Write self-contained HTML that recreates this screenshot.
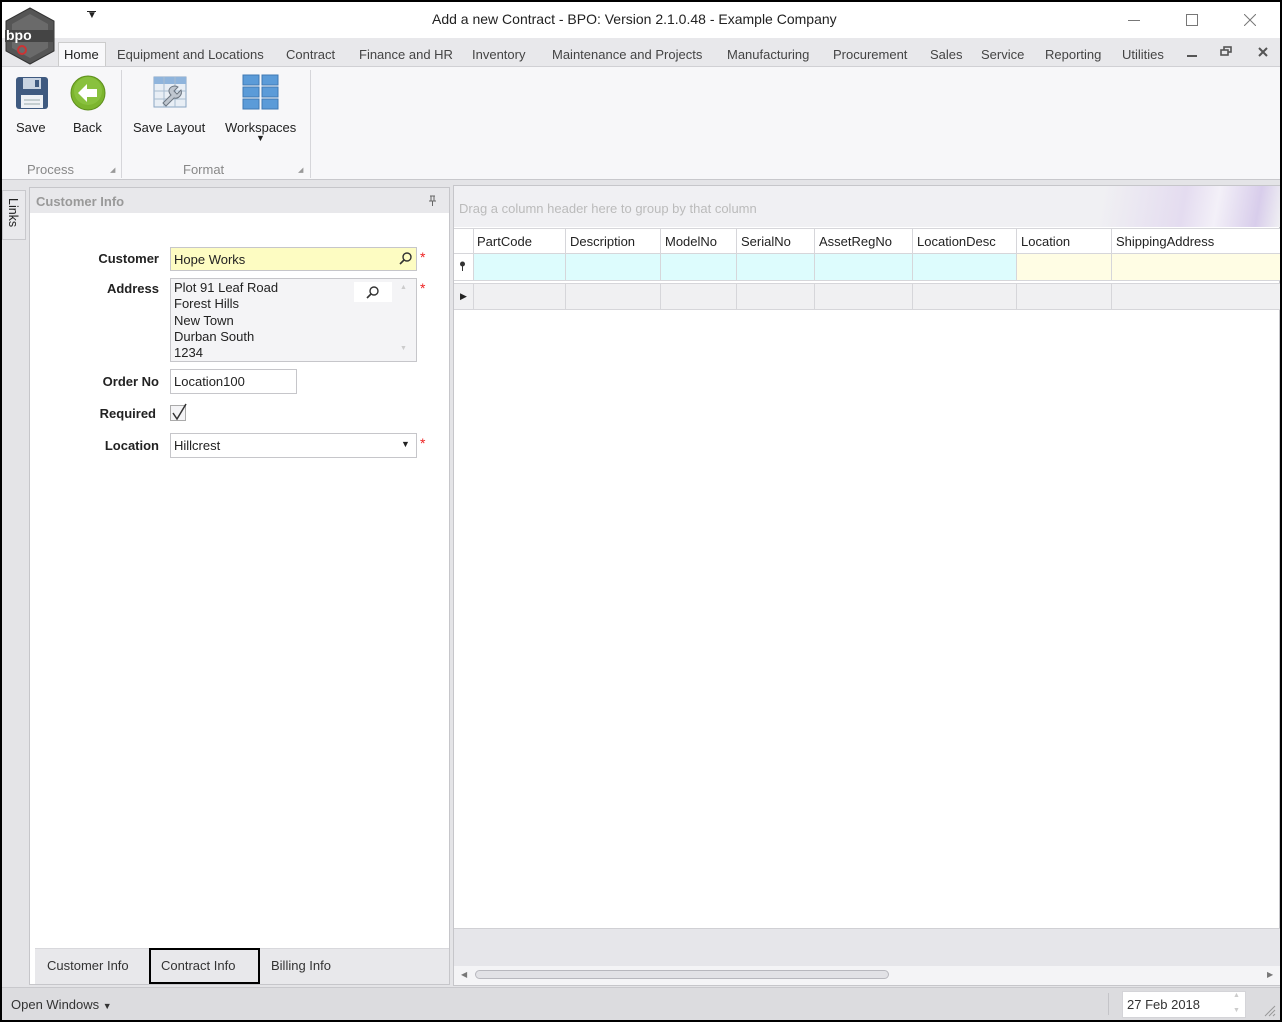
<!DOCTYPE html>
<html><head><meta charset="utf-8">
<style>
*{box-sizing:border-box;margin:0;padding:0}
body{width:1282px;height:1022px;position:relative;background:#000;font-family:"Liberation Sans",sans-serif;font-size:13px;color:#222;overflow:hidden}
.a{position:absolute}
.win{left:2px;top:2px;width:1278px;height:1018px;background:#e4e4e7;overflow:hidden}
.t{position:absolute;white-space:nowrap;font-size:13px}
.lbl{font-weight:bold;font-size:13px;color:#222;text-align:right;width:130px}
.col{position:absolute;top:0;height:100%;border-left:1px solid #d6d6da}
</style></head><body>
<div class="a win">
 <div class="a" style="left:0;top:0;width:1278px;height:36px;background:#fff"></div>
 <div class="t" style="left:430px;top:9px;font-size:14px;color:#222">Add a new Contract - BPO: Version 2.1.0.48 - Example Company</div>
 <div class="t" style="left:85px;top:8px;font-size:10px">&#9660;</div>
 <div class="a" style="left:85px;top:9px;width:9px;height:1px;background:#222"></div>
 <div class="a" style="left:1126px;top:18px;width:12px;height:1px;background:#777"></div>
 <div class="a" style="left:1184px;top:12px;width:12px;height:12px;border:1px solid #777"></div>
 <svg class="a" style="left:1242px;top:12px" width="12" height="12"><path d="M0 0L12 12M12 0L0 12" stroke="#777" stroke-width="1"/></svg>
 <div class="a" style="left:0;top:36px;width:1278px;height:28px;background:#e8e8eb"></div>
 <div class="a" style="left:56px;top:40px;width:48px;height:26px;background:#f8f8fa;border:1px solid #ccc;border-bottom:none"></div>
 <div class="t" style="left:62px;top:45px">Home</div>
 <div class="t" style="left:115px;top:45px;color:#444">Equipment and Locations</div>
 <div class="t" style="left:284px;top:45px;color:#444">Contract</div>
 <div class="t" style="left:357px;top:45px;color:#444">Finance and HR</div>
 <div class="t" style="left:470px;top:45px;color:#444">Inventory</div>
 <div class="t" style="left:550px;top:45px;color:#444">Maintenance and Projects</div>
 <div class="t" style="left:725px;top:45px;color:#444">Manufacturing</div>
 <div class="t" style="left:831px;top:45px;color:#444">Procurement</div>
 <div class="t" style="left:928px;top:45px;color:#444">Sales</div>
 <div class="t" style="left:979px;top:45px;color:#444">Service</div>
 <div class="t" style="left:1043px;top:45px;color:#444">Reporting</div>
 <div class="t" style="left:1120px;top:45px;color:#444">Utilities</div>
 <div class="a" style="left:1185px;top:53px;width:10px;height:2px;background:#555"></div>
 <svg class="a" style="left:1218px;top:44px" width="12" height="11"><rect x="4" y="1" width="7" height="5" fill="none" stroke="#555" stroke-width="1.6"/><rect x="1" y="4" width="7" height="5" fill="#e8e8eb" stroke="#555" stroke-width="1.6"/></svg>
 <svg class="a" style="left:1256px;top:45px" width="10" height="10"><path d="M1 1L9 9M9 1L1 9" stroke="#555" stroke-width="2"/></svg>
 <div class="a" style="left:0;top:64px;width:1278px;height:114px;background:#f7f7f9;border-top:1px solid #d0d0d4;border-bottom:1px solid #c8c8cc"></div>
 <div class="a" style="left:119px;top:68px;width:1px;height:108px;background:#d6d6da"></div>
 <div class="a" style="left:308px;top:68px;width:1px;height:108px;background:#d6d6da"></div>
 <svg class="a" style="left:13px;top:74px" width="34" height="34"><rect x="1" y="1" width="32" height="32" rx="3" fill="#3f5a80"/><rect x="8" y="2" width="18" height="11" fill="#c9d4e2"/><rect x="20" y="4" width="4" height="7" fill="#3f5a80"/><rect x="6" y="19" width="22" height="13" fill="#eef1f5"/><line x1="9" y1="24" x2="25" y2="24" stroke="#9aa" /><line x1="9" y1="28" x2="25" y2="28" stroke="#9aa"/></svg>
 <div class="t" style="left:14px;top:118px">Save</div>
 <svg class="a" style="left:68px;top:73px" width="36" height="36"><circle cx="18" cy="18" r="17" fill="#7cb52e" stroke="#5d8e1c"/><circle cx="18" cy="16" r="14" fill="#93c94a" opacity=".6"/><path d="M8 18L17 9V14H27V22H17V27Z" fill="#fff"/></svg>
 <div class="t" style="left:71px;top:118px">Back</div>
 <svg class="a" style="left:150px;top:72px" width="40" height="40"><rect x="2" y="3" width="32" height="30" fill="#e8eef5" stroke="#8aa6c4"/><rect x="2" y="3" width="32" height="7" fill="#8fb4dc"/><line x1="12" y1="3" x2="12" y2="33" stroke="#a8bcd0"/><line x1="23" y1="3" x2="23" y2="33" stroke="#a8bcd0"/><line x1="2" y1="17" x2="34" y2="17" stroke="#a8bcd0"/><line x1="2" y1="25" x2="34" y2="25" stroke="#a8bcd0"/><path d="M17 16a6 6 0 0 1 9-3l-4 4 3 3 4-4a6 6 0 0 1-7 8l-8 8-3-3 8-8a6 6 0 0 1-2-5z" fill="#bfc6cf" stroke="#6b7580"/></svg>
 <div class="t" style="left:131px;top:118px">Save Layout</div>
 <svg class="a" style="left:240px;top:72px" width="38" height="38"><g fill="#5b9bd8" stroke="#3f78b3"><rect x="1" y="1" width="16" height="10"/><rect x="20" y="1" width="16" height="10"/><rect x="1" y="13" width="16" height="10"/><rect x="20" y="13" width="16" height="10"/><rect x="1" y="25" width="16" height="10"/><rect x="20" y="25" width="16" height="10"/></g></svg>
 <div class="t" style="left:223px;top:118px">Workspaces</div>
 <div class="t" style="left:254px;top:131px;font-size:9px">&#9660;</div>
 <div class="t" style="left:25px;top:160px;color:#888">Process</div>
 <div class="t" style="left:181px;top:160px;color:#888">Format</div>
 <div class="t" style="left:108px;top:164px;font-size:7px;color:#999">&#9698;</div>
 <div class="t" style="left:296px;top:164px;font-size:7px;color:#999">&#9698;</div>
 <!-- logo on top -->
 <svg class="a" style="left:0;top:4px;z-index:5" width="56" height="62"><polygon points="28,2 52,15 52,45 28,58 4,45 4,15" fill="#555" stroke="#333"/><polygon points="28,8 46,18 46,42 28,52 10,42 10,18" fill="#6a6a6a"/><rect x="3" y="24" width="48" height="12" fill="#444"/><text x="4" y="34" font-family="Liberation Sans" font-size="14" font-weight="bold" fill="#fff">bpo</text><circle cx="20" cy="44" r="4" fill="none" stroke="#c33" stroke-width="2"/></svg>
 <div class="a" style="left:0;top:188px;width:24px;height:50px;background:#e9e9ec;border:1px solid #c8c8cc"></div>
 <div class="t" style="left:4px;top:196px;font-size:12.5px;writing-mode:vertical-rl">Links</div>
 <div class="a" style="left:27px;top:185px;width:421px;height:798px;background:#fff;border:1px solid #c6c6ca"></div>
 <div class="a" style="left:28px;top:186px;width:419px;height:25px;background:#e8e8eb"></div>
 <div class="t" style="left:34px;top:192px;font-weight:bold;color:#999">Customer Info</div>
 <svg class="a" style="left:426px;top:193px" width="9" height="11"><path d="M2 1H7M3 1V6M6 1V6M1 6H8M4.5 6V11" stroke="#666" fill="none"/></svg>
 <div class="t lbl" style="left:27px;top:249px">Customer</div>
 <div class="a" style="left:168px;top:245px;width:247px;height:24px;background:#fdfcc2;border:1px solid #c6c6ca"></div>
 <div class="t" style="left:172px;top:250px">Hope Works</div>
 <svg class="a" style="left:397px;top:249px" width="14" height="14"><circle cx="8" cy="6" r="4" fill="none" stroke="#333" stroke-width="1.4"/><line x1="5" y1="9" x2="1" y2="13" stroke="#333" stroke-width="1.6"/></svg>
 <div class="t" style="left:418px;top:247px;color:#e22;font-size:14px">*</div>
 <div class="t lbl" style="left:27px;top:279px">Address</div>
 <div class="a" style="left:168px;top:276px;width:247px;height:84px;background:#f4f4f6;border:1px solid #c6c6ca"></div>
 <div class="t" style="left:172px;top:278px;line-height:16.3px">Plot 91 Leaf Road<br>Forest Hills<br>New Town<br>Durban South<br>1234</div>
 <div class="a" style="left:352px;top:280px;width:38px;height:20px;background:#fff"></div>
 <svg class="a" style="left:364px;top:283px" width="14" height="14"><circle cx="8" cy="6" r="4" fill="none" stroke="#333" stroke-width="1.4"/><line x1="5" y1="9" x2="1" y2="13" stroke="#333" stroke-width="1.6"/></svg>
 <div class="t" style="left:398px;top:282px;font-size:7px;color:#ccc">&#9650;</div>
 <div class="t" style="left:398px;top:343px;font-size:7px;color:#ccc">&#9660;</div>
 <div class="t" style="left:418px;top:278px;color:#e22;font-size:14px">*</div>
 <div class="t lbl" style="left:27px;top:372px">Order No</div>
 <div class="a" style="left:168px;top:367px;width:127px;height:25px;background:#fff;border:1px solid #c6c6ca"></div>
 <div class="t" style="left:172px;top:372px">Location100</div>
 <div class="t lbl" style="left:24px;top:404px">Required</div>
 <div class="a" style="left:168px;top:403px;width:16px;height:16px;border:1px solid #aaa;background:#f4f4f6"></div>
 <svg class="a" style="left:168px;top:400px" width="18" height="20"><path d="M3 11L7 17L16 2" fill="none" stroke="#333" stroke-width="1.5"/></svg>
 <div class="t lbl" style="left:27px;top:436px">Location</div>
 <div class="a" style="left:168px;top:431px;width:247px;height:25px;background:#fff;border:1px solid #c6c6ca"></div>
 <div class="t" style="left:172px;top:436px">Hillcrest</div>
 <div class="t" style="left:399px;top:437px;font-size:9px">&#9660;</div>
 <div class="t" style="left:418px;top:433px;color:#e22;font-size:14px">*</div>
 <div class="a" style="left:33px;top:946px;width:414px;height:36px;background:#e8e8eb;border-top:1px solid #d8d8dc"></div>
 <div class="t" style="left:45px;top:956px;color:#333">Customer Info</div>
 <div class="a" style="left:147px;top:946px;width:111px;height:36px;border:2px solid #000;background:#e8e8eb"></div>
 <div class="t" style="left:159px;top:956px;color:#333">Contract Info</div>
 <div class="t" style="left:269px;top:956px;color:#333">Billing Info</div>
 <div class="a" style="left:451px;top:183px;width:827px;height:801px;background:#fff;border:1px solid #c6c6ca"></div>
 <div class="a" style="left:452px;top:184px;width:826px;height:41px;background:linear-gradient(100deg,#f0f0f3 78%,#e4dcf0 88%,#f3f0f8 92%,#d8cdeb 97%,#f0f0f3)"></div>
 <div class="t" style="left:457px;top:199px;color:#bbb">Drag a column header here to group by that column</div>
 <div class="a" style="left:452px;top:226px;width:826px;height:26px;background:#fff;border-top:1px solid #d6d6da;border-bottom:1px solid #d6d6da">
  <div class="col" style="left:19px"></div><div class="col" style="left:111px"></div><div class="col" style="left:206px"></div><div class="col" style="left:282px"></div><div class="col" style="left:360px"></div><div class="col" style="left:458px"></div><div class="col" style="left:562px"></div><div class="col" style="left:657px"></div>
 </div>
 <div class="t" style="left:475px;top:232px">PartCode</div>
 <div class="t" style="left:568px;top:232px">Description</div>
 <div class="t" style="left:663px;top:232px">ModelNo</div>
 <div class="t" style="left:739px;top:232px">SerialNo</div>
 <div class="t" style="left:817px;top:232px">AssetRegNo</div>
 <div class="t" style="left:915px;top:232px">LocationDesc</div>
 <div class="t" style="left:1019px;top:232px">Location</div>
 <div class="t" style="left:1114px;top:232px">ShippingAddress</div>
 <div class="a" style="left:452px;top:252px;width:826px;height:27px;background:#fff;border-bottom:1px solid #d6d6da">
  <div class="a" style="left:20px;top:0;width:543px;height:26px;background:#ddfcfd"></div>
  <div class="a" style="left:563px;top:0;width:263px;height:26px;background:#fffde4"></div>
  <div class="col" style="left:19px"></div><div class="col" style="left:111px"></div><div class="col" style="left:206px"></div><div class="col" style="left:282px"></div><div class="col" style="left:360px"></div><div class="col" style="left:458px"></div><div class="col" style="left:562px"></div><div class="col" style="left:657px"></div>
 </div>
 <svg class="a" style="left:457px;top:259px" width="7" height="10"><circle cx="3.5" cy="3" r="2.5" fill="#333"/><line x1="3.5" y1="5" x2="3.5" y2="10" stroke="#333"/></svg>
 <div class="a" style="left:452px;top:281px;width:826px;height:27px;background:#f0f0f2;border-top:1px solid #d6d6da;border-bottom:1px solid #d6d6da">
  <div class="col" style="left:19px"></div><div class="col" style="left:111px"></div><div class="col" style="left:206px"></div><div class="col" style="left:282px"></div><div class="col" style="left:360px"></div><div class="col" style="left:458px"></div><div class="col" style="left:562px"></div><div class="col" style="left:657px"></div>
 </div>
 <div class="t" style="left:458px;top:289px;font-size:9px">&#9654;</div>
 <div class="a" style="left:452px;top:926px;width:826px;height:38px;background:#e6e6ea;border-top:1px solid #d0d0d4"></div>
 <div class="a" style="left:452px;top:964px;width:826px;height:19px;background:#f4f4f6"></div>
 <div class="t" style="left:459px;top:968px;font-size:8px;color:#777">&#9664;</div>
 <div class="a" style="left:473px;top:968px;width:414px;height:9px;border:1px solid #b8b8be;border-radius:5px;background:#e2e2e6"></div>
 <div class="t" style="left:1265px;top:968px;font-size:8px;color:#777">&#9654;</div>
 <div class="a" style="left:0;top:985px;width:1278px;height:33px;background:#dcdcdf;border-top:1px solid #c8c8cc"></div>
 <div class="t" style="left:9px;top:995px;color:#333">Open Windows <span style="font-size:9px">&#9660;</span></div>
 <div class="a" style="left:1106px;top:991px;width:1px;height:22px;background:#c4c4c8"></div>
 <div class="a" style="left:1120px;top:989px;width:124px;height:27px;background:#fff;border:1px solid #d4d4d8"></div>
 <div class="t" style="left:1125px;top:995px;color:#333">27 Feb 2018</div>
 <div class="t" style="left:1231px;top:990px;font-size:7px;color:#ccc">&#9650;</div>
 <div class="t" style="left:1231px;top:1005px;font-size:7px;color:#ccc">&#9660;</div>
 <svg class="a" style="left:1262px;top:1003px" width="12" height="12"><path d="M11 1L1 11M11 5L5 11M11 9L9 11" stroke="#999"/></svg>
</div>
</body></html>
